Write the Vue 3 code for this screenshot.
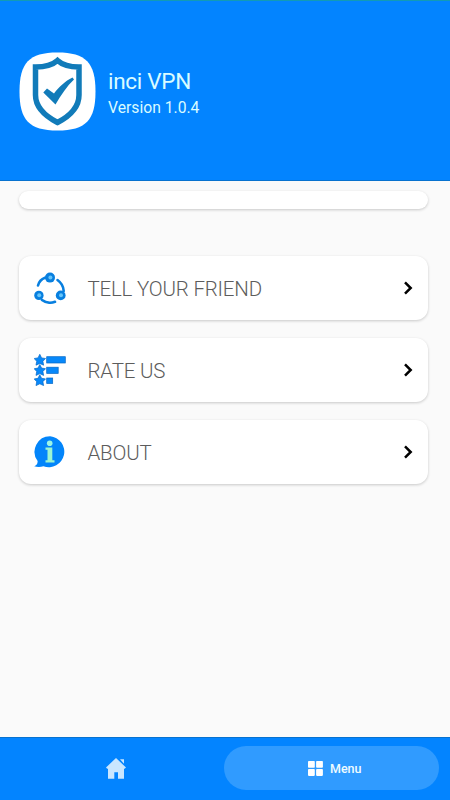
<template>
    <div class="screen">
        <header class="header">
            <svg class="logo" viewBox="0 0 77 79">
                <path d="M38.5 0.5C67 0.5 76.500 11 76.500 39.500S67 78.500 38.500 78.500 0.500 68 0.500 39.500 10 0.500 38.500 0.500Z" fill="#fff" />
                <path
                    d="M38.500 8.500C44 13.500 51 15 60 15V43C60 56 51 64 38.500 70.500 26 64 16.500 56 16.500 43V15C26 15 33 13.500 38.500 8.500Z"
                    fill="none"
                    stroke="#117bb9"
                    stroke-width="5.500"
                />
                <path d="M24.300 40.500L28 36.500 35 41.500C40 35 46 29 53.500 25.500L55 27.500C48 34 42 43 36.500 52.500Z" fill="#117bb9" />
            </svg>
            <div class="app-info">
                <h1 class="app-name">inci VPN</h1>
                <div class="app-version">Version 1.0.4</div>
            </div>
        </header>

        <main class="content">
            <div class="ad-card"></div>

            <button v-for="item in items" :key="item.id" class="card">
                <!-- Share: three linked nodes -->
                <svg v-if="item.id === 'share'" class="card-icon" viewBox="0 0 32 32">
                    <g fill="none" stroke="#087fdf" stroke-width="2.600" stroke-linecap="round">
                        <path d="M4 13.500C5 9.500 7.500 7 11 5.700" />
                        <path d="M23.500 8C27 10.500 29.500 14 29.700 19" />
                        <path d="M8 28C11.500 30.700 16.500 31.300 21 29.800" />
                    </g>
                    <g fill="#087fdf">
                        <circle cx="16" cy="5.600" r="5" />
                        <circle cx="4.900" cy="23.400" r="4.700" />
                        <circle cx="26.700" cy="23.400" r="4.900" />
                    </g>
                    <g fill="#65c5fa">
                        <circle cx="16.400" cy="5.400" r="2" />
                        <circle cx="5.200" cy="23.200" r="2" />
                        <circle cx="27" cy="23.200" r="2" />
                    </g>
                </svg>

                <!-- Rating: stars with bars -->
                <svg v-else-if="item.id === 'rate'" class="card-icon" viewBox="0 0 32 32">
                    <g fill="#0788fa" stroke="#0868c4" stroke-width="0.700">
                        <path
                            v-for="y in [0, 10.2, 20.4]"
                            :key="y"
                            :transform="`translate(0 ${y})`"
                            d="M5.800 0.300L7.600 3.900 11.500 4.500 8.900 7.300 9.600 11.200 5.800 9.400 2 11.200 2.700 7.300 0.200 4.500 4 3.900Z"
                        />
                        <rect x="12.700" y="2.700" width="18.600" height="6.300" />
                        <rect x="12.700" y="13.200" width="11.500" height="6.200" />
                        <rect x="12.700" y="24" width="6" height="5.500" />
                    </g>
                </svg>

                <!-- About: speech bubble with an i -->
                <svg v-else class="card-icon" viewBox="0 0 32 32">
                    <path d="M16.200 0.300A15.500 15.500 0 1 1 9.500 30.300C6 31.200 3 31 0.200 30.300 2.500 29.300 3.800 28 3.600 25A15.500 15.500 0 0 1 16.200 0.300Z" fill="#0385fa" />
                    <circle cx="15.700" cy="7.300" r="2.800" fill="#9df5e4" />
                    <path d="M11.500 11.500H18.300V24.200H20.500V26.500H11.500V24.200H13.500V13.700H11.500Z" fill="#9df5d2" />
                </svg>

                <span class="card-label">{{ item.label }}</span>
                <svg class="chevron" viewBox="0 0 10 14">
                    <path d="M2 1.300L7.700 7 2 12.700" fill="none" stroke="#000" stroke-width="2.500" />
                </svg>
            </button>
        </main>

        <nav class="nav">
            <button class="nav-item" aria-label="Home">
                <svg class="home-icon" viewBox="0 0 20 21">
                    <path d="M10 0L20 9.500 18.600 10.700H18V20.800H12V14.200H8.300V20.800H2V10.700H1.200L0 9.500Z" fill="#c9e6ff" />
                    <path d="M14 1.200H18V5.700Z" fill="#c9e6ff" />
                </svg>
            </button>
            <button class="nav-item active">
                <svg class="menu-icon" viewBox="0 0 15 15">
                    <g fill="#fff">
                        <rect width="6.800" height="6.800" rx="0.800" />
                        <rect x="8.100" width="6.800" height="6.800" rx="0.800" />
                        <rect y="8.100" width="6.800" height="6.800" rx="0.800" />
                        <rect x="8.100" y="8.100" width="6.800" height="6.800" rx="0.800" />
                    </g>
                </svg>
                <span>Menu</span>
            </button>
        </nav>
    </div>
</template>

<script setup>
const items = [
    { id: 'share', label: 'TELL YOUR FRIEND' },
    { id: 'rate', label: 'RATE US' },
    { id: 'about', label: 'ABOUT' }
];
</script>

<style>
body {
    margin: 0;
}
</style>

<style scoped>
.screen {
    display: flex;
    flex-direction: column;
    height: 100vh;
    background-color: #fafafa;
    font-family: Roboto, sans-serif;
}

button {
    padding: 0;
    border: 0;
    background: none;
    font-family: inherit;
}

/* Header */
.header {
    display: flex;
    align-items: center;
    box-sizing: border-box;
    height: 181px;
    padding: 2px 19px 0;
    border-top: 1px solid #129bb5;
    border-bottom: 1px solid #0872cf;
    background-color: #0384ff;
    color: #d9fbff;
}

.logo {
    width: 77px;
    height: 79px;
}

.app-info {
    margin-left: 12px;
    padding-top: 5px;
}

.app-name {
    margin: 0;
    font-size: 22.5px;
    font-weight: 400;
    line-height: 27px;
    letter-spacing: -0.3px;
}

.app-version {
    font-size: 15.7px;
    line-height: 25px;
}

/* Cards */
.content {
    display: flex;
    flex: 1;
    flex-direction: column;
    gap: 18px;
    padding: 9.5px 22px 0 19px;
}

.ad-card,
.card {
    border-radius: 12px;
    background-color: #fff;
    box-shadow: 0 1px 3px rgba(0, 0, 0, 0.2);
}

.ad-card {
    height: 18px;
    margin-bottom: 29.5px;
    border-radius: 9px;
}

.card {
    display: flex;
    align-items: center;
    height: 64px;
    padding: 0 15px;
}

.card-icon {
    width: 32px;
    height: 32px;
}

.card-label {
    flex: 1;
    margin-left: 21.5px;
    padding-top: 2px;
    color: #5c5c5c;
    font-size: 20.5px;
    font-weight: 350;
    letter-spacing: -0.2px;
    text-align: left;
}

.chevron {
    width: 10px;
    height: 14px;
}

/* Bottom navigation */
.nav {
    display: flex;
    align-items: center;
    box-sizing: border-box;
    height: 63px;
    padding: 0 11px 2px 8px;
    border-top: 1px solid #0872cf;
    background-color: #0384ff;
}

.nav-item {
    display: flex;
    flex: 1;
    align-items: center;
    justify-content: center;
    height: 44px;
    border-radius: 22px;
}

.nav-item.active {
    gap: 7px;
    background-color: #309bff;
    color: #effcff;
    font-size: 12.5px;
    font-weight: 500;
}

.home-icon {
    width: 20px;
    height: 21px;
}

.menu-icon {
    width: 15px;
    height: 15px;
    margin-left: 7px;
}
</style>
